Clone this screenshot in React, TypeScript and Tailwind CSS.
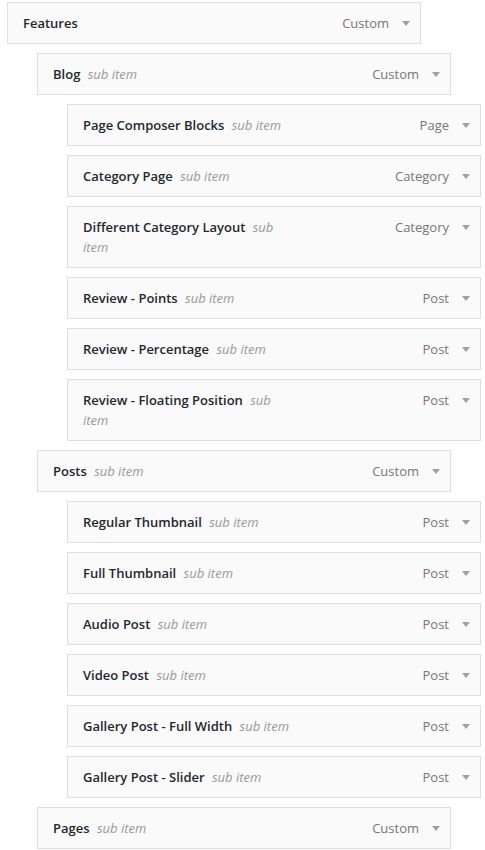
const items: { title: string; type: string; depth: number; sub?: boolean }[] = [
  { title: 'Features', type: 'Custom', depth: 0 },
  { title: 'Blog', type: 'Custom', depth: 1, sub: true },
  { title: 'Page Composer Blocks', type: 'Page', depth: 2, sub: true },
  { title: 'Category Page', type: 'Category', depth: 2, sub: true },
  { title: 'Different Category Layout', type: 'Category', depth: 2, sub: true },
  { title: 'Review - Points', type: 'Post', depth: 2, sub: true },
  { title: 'Review - Percentage', type: 'Post', depth: 2, sub: true },
  { title: 'Review - Floating Position', type: 'Post', depth: 2, sub: true },
  { title: 'Posts', type: 'Custom', depth: 1, sub: true },
  { title: 'Regular Thumbnail', type: 'Post', depth: 2, sub: true },
  { title: 'Full Thumbnail', type: 'Post', depth: 2, sub: true },
  { title: 'Audio Post', type: 'Post', depth: 2, sub: true },
  { title: 'Video Post', type: 'Post', depth: 2, sub: true },
  { title: 'Gallery Post - Full Width', type: 'Post', depth: 2, sub: true },
  { title: 'Gallery Post - Slider', type: 'Post', depth: 2, sub: true },
  { title: 'Pages', type: 'Custom', depth: 1, sub: true },
];

const depthClass = ['ml-0', 'ml-[30px]', 'ml-[60px]'];

function MenuItem({ title, type, depth, sub }: (typeof items)[number]) {
  return (
    <li className={depthClass[depth]}>
      <div className="flex w-[414px] items-start border border-[#dfdfdf] bg-[#fafafa] py-[10px] pl-[15px] pr-[10px] text-[13px] leading-5">
        <div className="w-[213px]">
          <span className="font-semibold text-[#23282d]">{title}</span>
          {sub && (
            <>
              {' '}
              <span className="ml-[4px] italic text-[#999]">sub item</span>
            </>
          )}
        </div>
        <div className="ml-auto flex h-5 items-center gap-[13px] text-[#777]">
          <span>{type}</span>
          <span className="h-0 w-0 border-x-[4px] border-t-[5px] border-x-transparent border-t-[#a0a0a0]" />
        </div>
      </div>
    </li>
  );
}

export default function App() {
  return (
    <div className="min-h-screen bg-white pl-[7px] pt-[2px]" style={{ fontFamily: '"Open Sans", "Noto Sans", sans-serif' }}>
      <ul className="flex flex-col gap-[9px]">
        {items.map((item, i) => (
          <MenuItem key={i} {...item} />
        ))}
      </ul>
    </div>
  );
}
